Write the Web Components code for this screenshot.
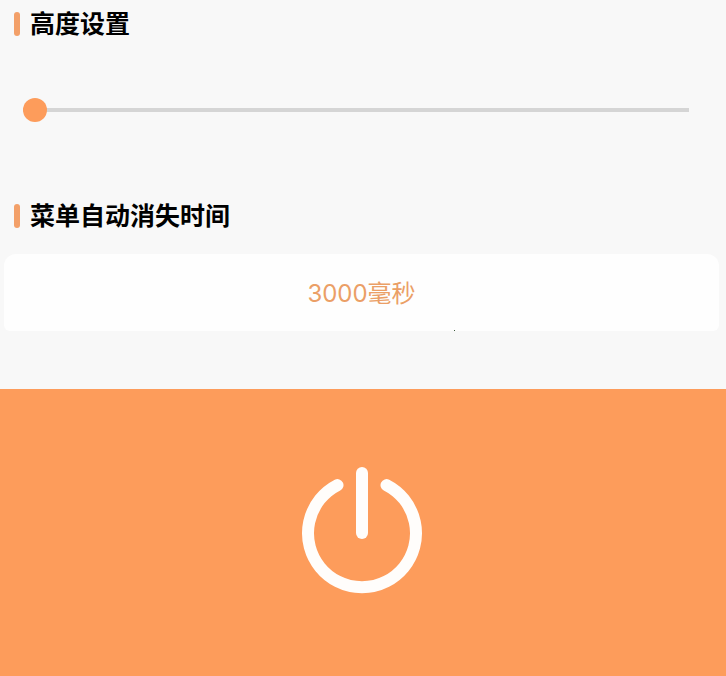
<!DOCTYPE html>
<html lang="zh-CN">
<head>
<meta charset="utf-8">
<meta name="viewport" content="width=device-width, initial-scale=1">
<title>设置</title>
<style>
  html, body { margin: 0; min-height: 100%; background: #f8f8f8; }
  body { font-family: Inter, "Noto Sans CJK SC", sans-serif; }
</style>
</head>
<body>
<settings-page>
  <settings-section>
    <section-title slot="title">高度设置</section-title>
    <height-slider label="高度设置"></height-slider>
  </settings-section>
  <settings-section>
    <section-title slot="title">菜单自动消失时间</section-title>
    <value-card>3000毫秒</value-card>
  </settings-section>
  <power-panel slot="footer" label="电源"></power-panel>
</settings-page>
<script>
  const define = (name, html, setup) => customElements.define(name, class extends HTMLElement {
    constructor() {
      super();
      this.attachShadow({ mode: "open" }).innerHTML = html;
    }
    connectedCallback() { if (setup) setup(this, this.shadowRoot); }
  });

  define("settings-page", `
    <style>
      :host { display: flex; flex-direction: column; min-height: 100vh; --accent: #fd9c5b; }
      main { display: flex; flex-direction: column; padding-bottom: 58px; }
      ::slotted(power-panel) { flex: 1; }
    </style>
    <main><slot></slot></main>
    <slot name="footer"></slot>`);

  define("settings-section", `
    <style>
      :host { display: block; }
    </style>
    <slot name="title"></slot>
    <slot></slot>`);

  define("section-title", `
    <style>
      :host { display: block; }
      h2 {
        display: flex; align-items: center; gap: 10px;
        margin: 0; padding: 0 14px; height: 48px;
        font-size: 25px; line-height: 38px; font-weight: 700; color: #000;
      }
      h2::before {
        content: ""; width: 6px; height: 24px; border-radius: 3px; background: #f3a069;
      }
    </style>
    <h2><slot></slot></h2>`);

  define("height-slider", `
    <style>
      :host { display: block; padding: 50px 37px 70px 23px; }
      input {
        -webkit-appearance: none; appearance: none;
        display: block; width: 100%; height: 24px; margin: 0; background: none;
      }
      input::-webkit-slider-runnable-track { height: 4px; background: #d5d5d5; }
      input::-webkit-slider-thumb {
        -webkit-appearance: none; width: 24px; height: 24px; margin-top: -10px;
        border-radius: 50%; background: var(--accent);
      }
    </style>
    <input type="range" min="0" max="100" value="0">`,
    (el, root) => root.querySelector("input").setAttribute("aria-label", el.getAttribute("label")));

  define("value-card", `
    <style>
      :host { display: block; padding: 14px 7px 0 4px; }
      button {
        position: relative; display: block; width: 100%; padding: 21px 20px 19px; border: 0;
        border-radius: 12px 12px 6px 6px; background: #fefefe; color: #eb9f66;
        font: inherit; font-size: 24px; line-height: 37px;
      }
      button::after {
        content: ""; position: absolute; left: 63%; bottom: 0;
        width: 1px; height: 1px; background: #3c5a3c;
      }
    </style>
    <button type="button"><slot></slot></button>`);

  define("power-panel", `
    <style>
      :host { display: flex; background: var(--accent); }
      button {
        flex: 1; display: flex; justify-content: center; align-items: flex-start;
        padding: 74px 2px 74px 0; border: 0; background: none; color: #fffdfb;
      }
      svg { display: block; width: 128px; height: 136px; }
    </style>
    <button type="button">
      <svg viewBox="0 0 128 136" fill="none" stroke="currentColor" stroke-width="12" stroke-linecap="round" aria-hidden="true">
        <path d="M39.500 22.100A54 54 0 1 0 88.500 22.100"/>
        <path d="M64 10V70"/>
      </svg>
    </button>`,
    (el, root) => root.querySelector("button").setAttribute("aria-label", el.getAttribute("label")));
</script>
</body>
</html>
